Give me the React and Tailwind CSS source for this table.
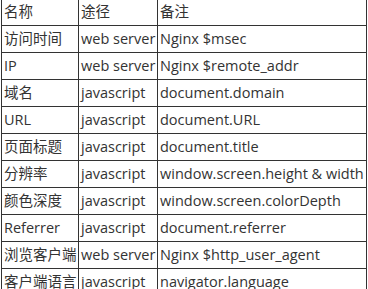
import React from 'react';

const ROWS = [
    ['名称', '途径', '备注'],
    ['访问时间', 'web server', 'Nginx $msec'],
    ['IP', 'web server', 'Nginx $remote_addr'],
    ['域名', 'javascript', 'document.domain'],
    ['URL', 'javascript', 'document.URL'],
    ['页面标题', 'javascript', 'document.title'],
    ['分辨率', 'javascript', 'window.screen.height & width'],
    ['颜色深度', 'javascript', 'window.screen.colorDepth'],
    ['Referrer', 'javascript', 'document.referrer'],
    ['浏览客户端', 'web server', 'Nginx $http_user_agent'],
    ['客户端语言', 'javascript', 'navigator.language'],
];

export default function App() {
    return (
        <div className="w-[368px] h-[289px] overflow-hidden bg-white">
            <table
                className="-mt-[2px] ml-[1px] w-[365px] border-collapse table-fixed text-[14.5px] text-[#333] leading-[26px]"
                style={{ fontFamily: '"Open Sans", "Noto Sans CJK SC", sans-serif' }}
            >
                <colgroup>
                    <col className="w-[77px]" />
                    <col className="w-[79px]" />
                    <col className="w-[209px]" />
                </colgroup>
                <tbody>
                    {ROWS.map((r, i) => (
                        <tr key={i} className="h-[27px]">
                            {r.map((c, j) => (
                                <td key={j} className="border border-[#333] pl-[2px] pr-0 py-0 whitespace-nowrap overflow-hidden align-middle">
                                    {c}
                                </td>
                            ))}
                        </tr>
                    ))}
                </tbody>
            </table>
        </div>
    );
}
